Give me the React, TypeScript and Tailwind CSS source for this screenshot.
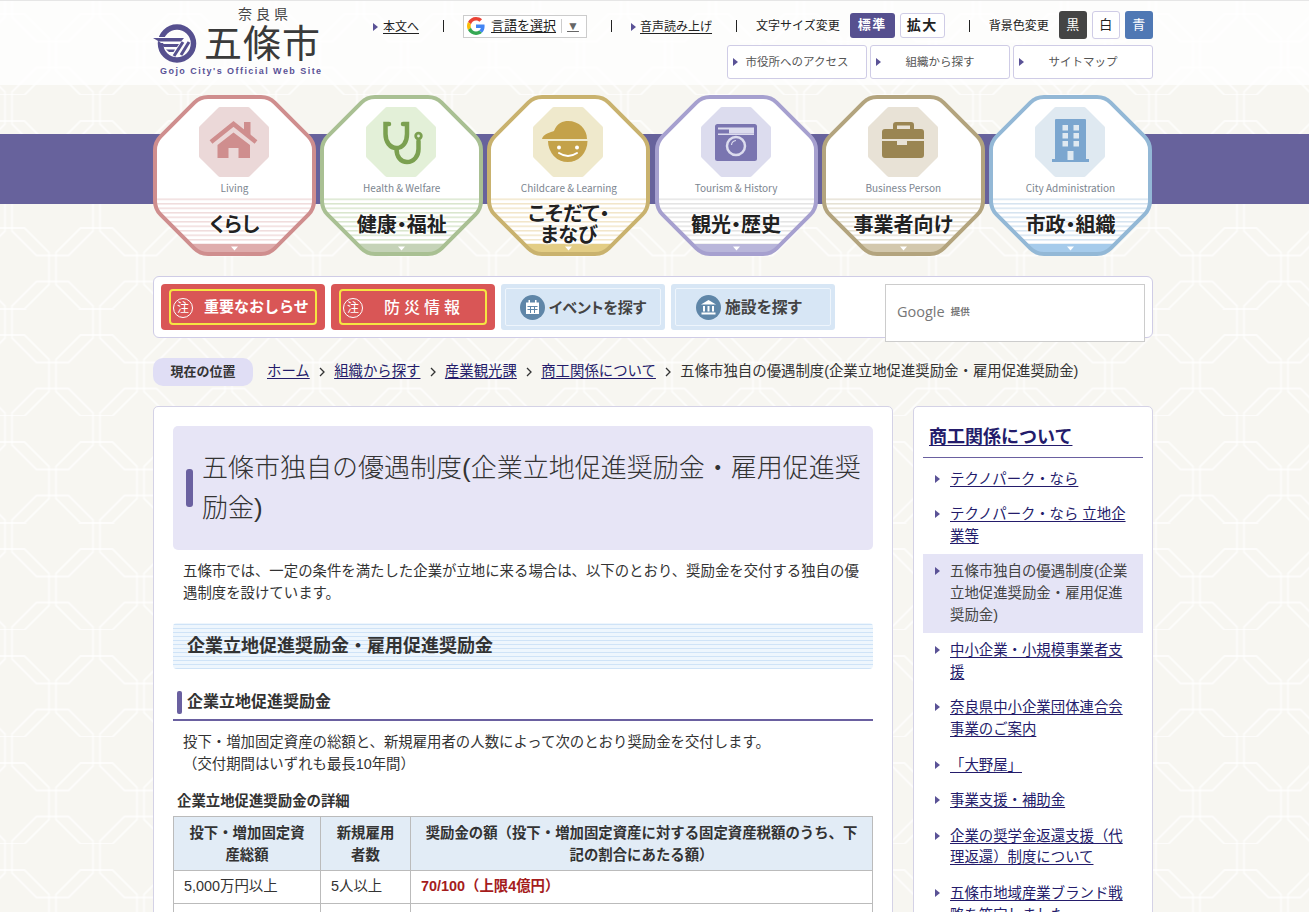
import type { ReactNode } from 'react';

const octagon = (x: number, y: number, w: number, h: number, c: number, r: number) => {
  const pts = [
    [x + c, y], [x + w - c, y], [x + w, y + c], [x + w, y + h - c],
    [x + w - c, y + h], [x + c, y + h], [x, y + h - c], [x, y + c],
  ];
  let d = '';
  pts.forEach((p, i) => {
    const prev = pts[(i + 7) % 8];
    const next = pts[(i + 1) % 8];
    const toward = (a: number[], b: number[]) => {
      const len = Math.hypot(b[0] - a[0], b[1] - a[1]);
      return [a[0] + ((b[0] - a[0]) / len) * r, a[1] + ((b[1] - a[1]) / len) * r];
    };
    const s = toward(p, prev);
    const e = toward(p, next);
    d += `${i === 0 ? 'M' : 'L'}${s[0]} ${s[1]}Q${p[0]} ${p[1]} ${e[0]} ${e[1]}`;
  });
  return d + 'Z';
};

function Arrow() {
  return (
    <span className="inline-block w-0 h-0 border-y-[4px] border-y-transparent border-l-[5px] border-l-[#5a5296]" />
  );
}

function Sep() {
  return (
    <span className="ml-[24px] mr-[19px] mt-[2px] flex">
      <span className="w-px h-[12px] bg-[#222]" />
    </span>
  );
}

function Lattice() {
  const half = (
    <g>
      <path d="M0 26H16L40.5 50.5V82.5L16 107H0" />
      <path d="M3.5 0V29L28 53.5H44M44 79.5H28L3.5 104V107" />
    </g>
  );
  return (
    <svg className="absolute inset-0 w-full h-full" aria-hidden="true">
      <defs>
        <pattern
          id="lattice"
          width="88"
          height="107"
          patternUnits="userSpaceOnUse"
          patternTransform="translate(8.5 95)"
        >
          <g fill="none" stroke="#fff" strokeWidth="1.8" strokeOpacity="0.7" strokeLinejoin="round">
            {half}
            <g transform="translate(88 0) scale(-1 1)">{half}</g>
          </g>
        </pattern>
      </defs>
      <rect width="100%" height="100%" fill="url(#lattice)" />
    </svg>
  );
}

function Logo() {
  return (
    <div className="w-[220px] shrink-0 pt-[5px]">
      <div className="ml-[85px] text-[14px] leading-[16px] tracking-[4px] text-[#444] whitespace-nowrap">奈良県</div>
      <div className="flex items-center h-[40px] mt-[2px]">
        <svg width="48" height="40" viewBox="0 0 48 40">
          <circle cx="24" cy="19.5" r="16.5" fill="none" stroke="#56508f" strokeWidth="5.5" />
          <path d="M0 13H34V19H8Z" fill="#fff" />
          <path d="M0 14H31L28 17.5H6Z" fill="#56508f" />
          <path d="M7 20H26L24 23H11Z" fill="#56508f" />
          <path d="M13 25.5H22L20.5 28H16Z" fill="#56508f" />
          <path d="M30 18L21 32M36 18L28 31" stroke="#56508f" strokeWidth="3" fill="none" />
        </svg>
        <span className="ml-[3px] text-[38px] leading-[40px] tracking-[1px] text-[#3a3a3a] whitespace-nowrap">五條市</span>
      </div>
      <div className="ml-[7px] mt-[1px] text-[9px] leading-[12px] font-bold tracking-[1.45px] text-[#5a5296] whitespace-nowrap">
        Gojo City's Official Web Site
      </div>
    </div>
  );
}

function GoogleG() {
  return (
    <svg width="18" height="18" viewBox="0 0 48 48">
      <path fill="#EA4335" d="M24 9.5c3.5 0 6.700 1.300 9.200 3.400l6.900-6.900C35.900 2.400 30.300 0 24 0 14.600 0 6.500 5.400 2.600 13.200l8 6.200C12.500 13.600 17.800 9.500 24 9.500z" />
      <path fill="#4285F4" d="M46.900 24.500c0-1.600-.1-3.100-.4-4.500H24v9h12.900c-.6 3-2.200 5.500-4.700 7.200l7.700 6c4.500-4.200 7-10.300 7-17.700z" />
      <path fill="#FBBC05" d="M10.500 28.600c-.5-1.500-.8-3-.8-4.600s.3-3.200.8-4.600l-8-6.200C.9 16.500 0 20.100 0 24s.9 7.500 2.600 10.800l7.900-6.200z" />
      <path fill="#34A853" d="M24 48c6.500 0 11.900-2.100 15.900-5.800l-7.700-6c-2.200 1.400-4.900 2.300-8.200 2.300-6.200 0-11.500-4.200-13.400-9.900l-8 6.200C6.500 42.600 14.600 48 24 48z" />
    </svg>
  );
}

function TopLinks() {
  return (
    <div className="flex-1">
      <div className="flex items-center h-[28px] mt-[10px] text-[12px] text-[#222] whitespace-nowrap">
        <span className="mt-[3px] flex"><Arrow /></span>
        <a className="ml-[5px] mt-[3px] underline underline-offset-2">本文へ</a>
        <Sep />
        <div className="w-[124px] h-[23px] mt-[2px] border border-[#ccc] bg-white flex items-center pl-[3px]">
          <GoogleG />
          <span className="ml-[6px] text-[13px] underline underline-offset-2">言語を選択</span>
          <span className="ml-[5px] w-px h-[14px] bg-[#ccc]" />
          <span className="ml-[5px] text-[#666] text-[12px] leading-none underline">▼</span>
        </div>
        <Sep />
        <span className="mt-[3px] flex"><Arrow /></span>
        <a className="ml-[4px] mt-[3px] underline underline-offset-2">音声読み上げ</a>
        <Sep />
        <span className="mt-[1px]">文字サイズ変更</span>
        <span className="ml-[10px] w-[45px] h-[25px] rounded-[3px] bg-[#56508f] text-white text-[13px] font-bold tracking-[1.5px] flex items-center justify-center">標準</span>
        <span className="ml-[5px] w-[45px] h-[25px] rounded-[3px] bg-white border border-[#cfcce6] text-[14px] font-bold tracking-[1.5px] flex items-center justify-center">拡大</span>
        <Sep />
        <span className="mt-[1px]">背景色変更</span>
        <span className="ml-[10px] w-[28px] h-[28px] rounded-[3px] bg-[#444] text-white text-[13px] flex items-center justify-center">黒</span>
        <span className="ml-[5px] w-[28px] h-[28px] rounded-[3px] bg-white border border-[#cfcce6] text-[13px] flex items-center justify-center">白</span>
        <span className="ml-[5px] w-[28px] h-[28px] rounded-[3px] bg-[#4f78b4] text-white text-[13px] flex items-center justify-center">青</span>
      </div>
      <div className="flex justify-end gap-[3px] mt-[6px]">
        {['市役所へのアクセス', '組織から探す', 'サイトマップ'].map((t) => (
          <a
            key={t}
            className="relative w-[140px] h-[34px] pt-[1px] rounded-[3px] bg-white border border-[#cfcce6] flex items-center justify-center text-[11.500px] text-[#555]"
          >
            <span className="absolute left-[5px] top-[12px] flex"><Arrow /></span>
            {t}
          </a>
        ))}
      </div>
    </div>
  );
}

const icons: Record<string, ReactNode> = {
  house: (
    <g fill="#cf8e8e">
      <rect x="45" y="15" width="6.500" height="13" />
      <path d="M12 35L34.500 17L57 35" fill="none" stroke="#cf8e8e" strokeWidth="4.500" />
      <path d="M18.500 38L34.500 25.500L51 38V51H39.500V41H29.500V51H18.500Z" />
    </g>
  ),
  steth: (
    <g fill="none" stroke="#7ba050" strokeWidth="4.500" strokeLinecap="round">
      <path d="M23 17H19.500V27C19.500 35 24 41 30.500 41C37 41 41 35 41 27V17H37" />
      <path d="M30.500 42C30.500 50 35 55 41 55C48 55 52.500 49 52.500 42V34" />
      <circle cx="52.500" cy="29" r="2.800" strokeWidth="2.800" />
    </g>
  ),
  child: (
    <g>
      <path d="M9 32C10 27 18 25 21 24C24 16 30 14 35 14C46 14 54 22 54 32Z" fill="#c4a24a" />
      <path d="M15 34H54.500A19.700 21 0 0 1 15 34Z" fill="#c4a24a" />
      <circle cx="26" cy="40.500" r="2" fill="#fff" />
      <circle cx="44" cy="40.500" r="2" fill="#fff" />
      <path d="M26 46Q35 52 44 46" stroke="#fff" strokeWidth="2" fill="none" strokeLinecap="round" />
    </g>
  ),
  camera: (
    <g>
      <rect x="14" y="17" width="42" height="37" rx="2.500" fill="#7a75b0" />
      <path d="M17 20.500H28V22.500H17ZM17 26.500H53V28H17Z" fill="#dcdcee" />
      <path d="M28 20.500H53V26.500H28Z" fill="#dcdcee" />
      <circle cx="35" cy="39" r="9" fill="none" stroke="#dcdcee" strokeWidth="2.500" />
      <path d="M30.500 38A5 5 0 0 1 35 33.500" fill="none" stroke="#dcdcee" strokeWidth="1.200" />
    </g>
  ),
  case: (
    <g fill="#9a8552">
      <path d="M25 22V18Q25 15 28 15H43Q46 15 46 18V22H42V18.500H29V22Z" />
      <path d="M14 32V25Q14 22 17 22H53Q56 22 56 25V32Z" />
      <path d="M14 34H29V38H39V34H56V48Q56 51 53 51H17Q14 51 14 48Z" />
    </g>
  ),
  building: (
    <g>
      <rect x="20" y="12" width="31" height="41" rx="1" fill="#7ba6cf" />
      <rect x="17" y="52" width="37" height="3" fill="#7ba6cf" />
      <g fill="#dfe9f1">
        <rect x="27.500" y="18" width="5.500" height="5.500" />
        <rect x="38.500" y="18" width="5.500" height="5.500" />
        <rect x="27.500" y="26" width="5.500" height="5.500" />
        <rect x="38.500" y="26" width="5.500" height="5.500" />
        <rect x="27.500" y="34" width="5.500" height="5.500" />
        <rect x="38.500" y="34" width="5.500" height="5.500" />
        <rect x="32.500" y="44" width="6" height="9" />
      </g>
    </g>
  ),
};

const navItems = [
  { id: 'a', en: 'Living', ja: ['くらし'], icon: 'house', border: '#cf8e8e', pale: '#ebd8d8', tab: '#dfadad', stripe: '#f0dcdc' },
  { id: 'b', en: 'Health & Welfare', ja: ['健康・福祉'], icon: 'steth', border: '#a9c093', pale: '#e3f0d8', tab: '#c5d3b8', stripe: '#d9e6cd' },
  { id: 'c', en: 'Childcare & Learning', ja: ['こそだて・', 'まなび'], icon: 'child', border: '#c9b26e', pale: '#efe9cc', tab: '#e3cd85', stripe: '#f2e6c9' },
  { id: 'd', en: 'Tourism & History', ja: ['観光・歴史'], icon: 'camera', border: '#a6a0cf', pale: '#dcdcee', tab: '#b9b6da', stripe: '#e3e3e3' },
  { id: 'e', en: 'Business Person', ja: ['事業者向け'], icon: 'case', border: '#b3a47e', pale: '#e8e2d6', tab: '#d3c8ad', stripe: '#e5e0d3' },
  { id: 'f', en: 'City Administration', ja: ['市政・組織'], icon: 'building', border: '#93b8d6', pale: '#dfe9f1', tab: '#a6cbeb', stripe: '#d5e3f0' },
];

function NavCard({ item }: { item: (typeof navItems)[number] }) {
  const outline = octagon(2, 2, 159, 157, 45, 8);
  return (
    <a className="relative block w-[163px] h-[161px] font-['Noto_Sans_CJK_JP',sans-serif]">
      <svg className="absolute inset-0" width="163" height="161" viewBox="0 0 163 161">
        <defs>
          <clipPath id={`clip-${item.id}`}>
            <path d={outline} />
          </clipPath>
          <pattern id={`stripe-${item.id}`} width="4" height="4.500" patternUnits="userSpaceOnUse">
            <rect width="4" height="1.500" fill={item.stripe} />
          </pattern>
        </defs>
        <path d={outline} fill="#fff" />
        <g clipPath={`url(#clip-${item.id})`}>
          <rect y="101" width="163" height="48" fill={`url(#stripe-${item.id})`} />
          <rect y="149" width="163" height="12" fill={item.tab} />
        </g>
        <path d="M78 151.500H85L81.500 155.500Z" fill="#fff" />
        <path d={outline} fill="none" stroke={item.border} strokeWidth="4" />
      </svg>
      <div className="relative flex flex-col items-center pt-[12px]">
        <svg className="-ml-[1px]" width="70" height="70" viewBox="0 0 70 70">
          <path d={octagon(0, 0, 70, 70, 20, 1)} fill={item.pale} />
          {icons[item.icon]}
        </svg>
        <div className="mt-[3px] text-[10px] leading-[16px] text-[#7c8590] whitespace-nowrap">{item.en}</div>
        <div className="mt-[7px] h-[40px] flex flex-col items-center justify-center text-[20px] leading-[21px] font-bold text-[#222] [font-feature-settings:'palt'] [text-shadow:0_0_3px_#fff,0_0_3px_#fff]">
          {item.ja.map((l) => (
            <span key={l} className="whitespace-nowrap">{l}</span>
          ))}
        </div>
      </div>
    </a>
  );
}

function AlertButton({ label, wide }: { label: string; wide?: boolean }) {
  return (
    <a className="w-[164px] h-[46px] rounded-[4px] bg-[#d95656] p-[5px_8px] flex">
      <span className="flex-1 rounded-[4px] border-2 border-[#f5e642] flex items-center pl-[2px] pt-[1px] text-white font-bold">
        <span className="w-[20px] h-[20px] rounded-full border border-white flex items-center justify-center text-[12px] font-normal">注</span>
        <span className={wide ? 'ml-[21px] text-[16px] tracking-[4px] font-medium' : 'ml-[11px] text-[15px]'}>{label}</span>
      </span>
    </a>
  );
}

function FindButton({ label, icon, inset, size }: { label: string; icon: ReactNode; inset: string; size: string }) {
  return (
    <a className="w-[164px] h-[46px] rounded-[3px] bg-[#d7e6f5] p-[4px] flex">
      <span className={`flex-1 rounded-[2px] border border-[#eef5fc] flex items-center ${inset}`}>
        <svg width="25" height="25" viewBox="0 0 25 25">
          <circle cx="12.500" cy="12.500" r="12.500" fill="#5f86a8" />
          {icon}
        </svg>
        <span className={`ml-[4px] pt-[2px] font-bold text-[#444] [font-feature-settings:'palt'] whitespace-nowrap ${size}`}>{label}</span>
      </span>
    </a>
  );
}

function SearchPanel() {
  return (
    <div className="h-[62px] mt-[20px] rounded-[6px] bg-white border border-[#cfcce6] flex items-start pt-[7px] pl-[7px]">
      <div className="flex gap-[6px]">
        <AlertButton label="重要なおしらせ" />
        <AlertButton label="防災情報" wide />
        <FindButton
          label="イベントを探す"
          size="text-[15px]"
          inset="pl-[14px]"
          icon={
            <g fill="#fff">
              <path d="M6 7.500H19V19H6Z" />
              <path d="M8.500 5H10V8.500H8.500ZM15 5H16.500V8.500H15Z" />
              <path d="M7.500 11H17.500V12H7.500ZM7.500 14H17.500V15H7.500ZM10 11H11V18H10ZM14 11H15V18H14Z" fill="#5f86a8" />
            </g>
          }
        />
        <FindButton
          label="施設を探す"
          size="text-[15.800px]"
          inset="pl-[20px]"
          icon={
            <g fill="#fff">
              <path d="M12.500 5L20 9.500H5Z" />
              <path d="M7 11H9V16.500H7ZM11.500 11H13.500V16.500H11.500ZM16 11H18V16.500H16ZM5.500 17.500H19.500V19.500H5.500Z" />
            </g>
          }
        />
      </div>
      <div className="relative z-10 ml-[50px] w-[260px] h-[58px] bg-white border border-[#ccc] flex items-center pl-[11px] pb-[2px] text-[#777]">
        <span className="text-[14.500px] font-['Open_Sans',sans-serif]">Google</span>
        <span className="ml-[6px] text-[9.500px] font-bold">提供</span>
      </div>
    </div>
  );
}

function Breadcrumb() {
  const links = ['ホーム', '組織から探す', '産業観光課', '商工関係について'];
  return (
    <div className="flex items-center h-[28px] mt-[20px] text-[14.400px] text-[#333]">
      <span className="w-[100px] h-[28px] rounded-[10px] bg-[#e0def5] flex items-center justify-center text-[13px] font-bold text-[#333]">現在の位置</span>
      <span className="ml-[14px] flex items-center">
        {links.map((l) => (
          <span key={l} className="flex items-center">
            <a className="underline underline-offset-2 text-[#241c6b]">{l}</a>
            <svg className="mx-[9.200px]" width="6" height="10" viewBox="0 0 6 10">
              <path d="M1 1L5 5L1 9" fill="none" stroke="#333" strokeWidth="1.300" />
            </svg>
          </span>
        ))}
        <span className="whitespace-nowrap">五條市独自の優遇制度(企業立地促進奨励金・雇用促進奨励金)</span>
      </span>
    </div>
  );
}

function Content() {
  return (
    <main className="w-[740px] h-[700px] rounded-[5px] bg-white border border-[#d4d2e6] p-[19px] text-[14.400px] leading-[21.600px] text-[#333]">
      <h1 className="h-[124px] rounded-[5px] bg-[#e7e5f6] flex items-center pl-[13px] pr-[10px]">
        <span className="w-[7px] h-[38px] rounded-[3px] bg-[#6a60a0] shrink-0" />
        <span className="ml-[9px] text-[26px] leading-[40px] font-light text-[#333]">
          五條市独自の優遇制度(企業立地促進奨励金・雇用促進奨励金)
        </span>
      </h1>
      <p className="mt-[11px] px-[10px]">
        五條市では、一定の条件を満たした企業が立地に来る場合は、以下のとおり、奨励金を交付する独自の優遇制度を設けています。
      </p>
      <h2 className="mt-[19px] h-[46px] pt-[1px] rounded-[4px] flex items-center pl-[14px] text-[18px] font-bold bg-[#eef6fd] bg-[repeating-linear-gradient(0deg,#cfe3f7_0,#cfe3f7_1px,transparent_1px,transparent_4px)]">
        企業立地促進奨励金・雇用促進奨励金
      </h2>
      <h3 className="mt-[21px] h-[31px] border-b-2 border-[#6a60a0] flex items-start pl-[4px] text-[16px] font-bold">
        <span className="w-[5px] h-[23px] mt-[1px] rounded-[2px] bg-[#6a60a0]" />
        <span className="ml-[5px] leading-[23px]">企業立地促進奨励金</span>
      </h3>
      <p className="mt-[11px] px-[10px]">
        投下・増加固定資産の総額と、新規雇用者の人数によって次のとおり奨励金を交付します。
        <br />
        （交付期間はいずれも最長10年間）
      </p>
      <p className="mt-[16px] mb-[3px] pl-[4px] font-bold">企業立地促進奨励金の詳細</p>
      <table className="w-full table-fixed border-collapse">
        <thead>
          <tr className="bg-[#e2ecf6] text-center font-bold">
            <th className="w-[147px] border border-[#bbb] px-[10px] pt-[6px] pb-[4px]">投下・増加固定資産総額</th>
            <th className="w-[90px] border border-[#bbb] px-[10px] pt-[6px] pb-[4px]">新規雇用者数</th>
            <th className="border border-[#bbb] px-[10px] pt-[6px] pb-[4px]">
              奨励金の額（投下・増加固定資産に対する固定資産税額のうち、下記の割合にあたる額）
            </th>
          </tr>
        </thead>
        <tbody>
          <tr>
            <td className="border border-[#bbb] px-[10px] py-[5px]">5,000万円以上</td>
            <td className="border border-[#bbb] px-[10px] py-[5px]">5人以上</td>
            <td className="border border-[#bbb] px-[10px] py-[5px] font-bold text-[#a51c1c]">70/100（上限4億円）</td>
          </tr>
          <tr>
            <td className="border border-[#bbb] h-[33px]" />
            <td className="border border-[#bbb]" />
            <td className="border border-[#bbb]" />
          </tr>
        </tbody>
      </table>
    </main>
  );
}

const sideLinks = [
  { t: 'テクノパーク・なら' },
  { t: 'テクノパーク・なら 立地企業等' },
  { t: '五條市独自の優遇制度(企業立地促進奨励金・雇用促進奨励金)', current: true },
  { t: '中小企業・小規模事業者支援' },
  { t: '奈良県中小企業団体連合会事業のご案内' },
  { t: '「大野屋」' },
  { t: '事業支援・補助金' },
  { t: '企業の奨学金返還支援（代理返還）制度について' },
  { t: '五條市地域産業ブランド戦略を策定しました' },
];

function Sidebar() {
  return (
    <aside className="w-[240px] h-[700px] rounded-[5px] bg-white border border-[#d4d2e6] pt-[17px] px-[9px]">
      <div className="border-b border-[#6a60a0] pb-[7px] pl-[6px]">
        <a className="text-[18px] leading-[26px] font-bold underline underline-offset-2 text-[#241c6b]">商工関係について</a>
      </div>
      <ul className="mt-[3.600px] text-[14.400px] leading-[21.600px]">
        {sideLinks.map((l) => (
          <li
            key={l.t}
            className={`relative pl-[27px] pr-[14px] py-[7px] ${l.current ? 'bg-[#e5e4f6] text-[#444]' : 'text-[#241c6b]'}`}
          >
            <span className="absolute left-[12px] top-[13px] flex"><Arrow /></span>
            {l.current ? l.t : <a className="underline underline-offset-2">{l.t}</a>}
          </li>
        ))}
      </ul>
    </aside>
  );
}

function App() {
  return (
    <div className="relative h-[912px] overflow-hidden bg-[#f7f6f1] font-['Liberation_Sans','Noto_Sans_CJK_JP',sans-serif]">
      <Lattice />
      <header className="relative h-[85px] bg-white/80 border-t border-[#e6e6e6]">
        <div className="flex w-[1000px] ml-[153px]">
          <Logo />
          <TopLinks />
        </div>
      </header>
      <div className="relative">
        <div className="absolute left-0 right-0 top-[49px] h-[70px] bg-[#67629c]" />
        <div className="relative w-[1000px] ml-[153px]">
          <nav className="flex justify-between pt-[10px] pr-[1px]">
            {navItems.map((item) => (
              <NavCard key={item.id} item={item} />
            ))}
          </nav>
          <SearchPanel />
          <Breadcrumb />
          <div className="flex gap-[20px] items-start mt-[20px]">
            <Content />
            <Sidebar />
          </div>
        </div>
      </div>
    </div>
  );
}

export default App;
